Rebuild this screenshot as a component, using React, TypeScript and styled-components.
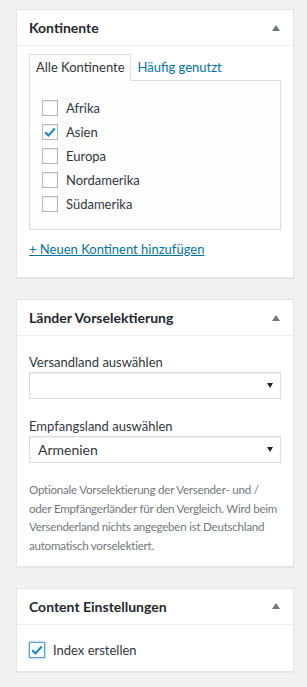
import React, { useState } from "react";
import styled, { createGlobalStyle } from "styled-components";

const GlobalStyle = createGlobalStyle`
  html, body {
    margin: 0;
    padding: 0;
    background: #f1f1f1;
  }
  body {
    font-family: Lato, "Open Sans", sans-serif;
    font-size: 13px;
    color: #444;
  }
`;

const Sidebar = styled.div`
  padding: 9px 13px 16px 16px;
  display: flex;
  flex-direction: column;
  gap: 21px;
`;

const Postbox = styled.section`
  background: #fff;
  border: 1px solid #e5e5e5;
  box-shadow: 0 1px 1px rgba(0, 0, 0, 0.04);
`;

const PostboxHeader = styled.div`
  display: flex;
  align-items: center;
  justify-content: space-between;
  padding: 8px 12px;
  border-bottom: 1px solid #eee;
`;

const PostboxTitle = styled.h2`
  margin: 0;
  font-size: 14px;
  line-height: 19px;
  font-weight: 700;
  color: #23282d;
`;

const ToggleArrow = styled.span`
  width: 0;
  height: 0;
  margin-right: 1px;
  border-left: 4px solid transparent;
  border-right: 4px solid transparent;
  border-bottom: 6px solid #72777c;
`;

const Inside = styled.div<{ top: number; bottom: number }>`
  padding: ${(p) => p.top}px 12px ${(p) => p.bottom}px;
`;

const Tabs = styled.ul`
  display: flex;
  margin: 0;
  padding: 0;
  list-style: none;
`;

const Tab = styled.li<{ active?: boolean }>`
  padding: 3px 5px 4px 6px;
  line-height: 19px;
  border: 1px solid ${(p) => (p.active ? "#ddd" : "transparent")};
  border-bottom: none;
  background: ${(p) => (p.active ? "#fdfdfd" : "transparent")};
  color: ${(p) => (p.active ? "#32373c" : "#0073aa")};
  margin-bottom: -1px;
  position: relative;
  cursor: pointer;
`;

const TabsPanel = styled.ul`
  margin: 0;
  padding: 15px 12px 13px;
  list-style: none;
  border: 1px solid #ddd;
  background: #fdfdfd;
`;

const CheckRow = styled.label`
  display: flex;
  align-items: center;
  gap: 8px;
  line-height: 24px;
  color: #32373c;
  cursor: pointer;
`;

const Box = styled.span<{ focused?: boolean }>`
  box-sizing: border-box;
  width: 16px;
  height: 16px;
  flex: none;
  display: flex;
  align-items: center;
  justify-content: center;
  background: #fff;
  border: 1px solid ${(p) => (p.focused ? "#5b9dd9" : "#b4b9be")};
  box-shadow: ${(p) =>
    p.focused
      ? "0 0 2px rgba(30, 140, 190, 0.8)"
      : "inset 0 1px 2px rgba(0, 0, 0, 0.1)"};
`;

const AddLink = styled.a`
  display: inline-block;
  margin-top: 10px;
  color: #0073aa;
  text-decoration: underline;
  font-size: 13px;
  line-height: 19px;
`;

const FieldLabel = styled.div`
  line-height: 19px;
  color: #32373c;
`;

const Select = styled.div`
  box-sizing: border-box;
  height: 27px;
  display: flex;
  align-items: center;
  justify-content: space-between;
  padding: 0 7px 0 8px;
  border: 1px solid #ddd;
  box-shadow: inset 0 1px 2px rgba(0, 0, 0, 0.07);
  font-size: 14px;
  color: #32373c;
  margin-bottom: 18px;
`;

const SelectArrow = styled.span`
  width: 0;
  height: 0;
  border-left: 3px solid transparent;
  border-right: 3px solid transparent;
  border-top: 5px solid #222;
`;

const Description = styled.p`
  margin: 0;
  font-size: 11.6px;
  line-height: 18.7px;
  letter-spacing: -0.25px;
  color: #72777c;
`;

const Check = () => (
  <svg width="14" height="14" viewBox="0 0 14 14">
    <path
      d="M2.2 7.2 L5.4 10.4 L11.8 3.4"
      fill="none"
      stroke="#1e8cbe"
      strokeWidth="2.2"
    />
  </svg>
);

const continents = ["Afrika", "Asien", "Europa", "Nordamerika", "Südamerika"];

export default function App() {
  const [checked, setChecked] = useState<string[]>(["Asien"]);
  const [index, setIndex] = useState(true);

  const toggle = (name: string) =>
    setChecked((c) => (c.includes(name) ? c.filter((x) => x !== name) : [...c, name]));

  return (
    <>
      <GlobalStyle />
      <Sidebar>
        <Postbox>
          <PostboxHeader>
            <PostboxTitle>Kontinente</PostboxTitle>
            <ToggleArrow />
          </PostboxHeader>
          <Inside top={8} bottom={18}>
            <Tabs>
              <Tab active>Alle Kontinente</Tab>
              <Tab>Häufig genutzt</Tab>
            </Tabs>
            <TabsPanel>
              {continents.map((c) => (
                <li key={c}>
                  <CheckRow onClick={() => toggle(c)}>
                    <Box>{checked.includes(c) && <Check />}</Box>
                    {c}
                  </CheckRow>
                </li>
              ))}
            </TabsPanel>
            <AddLink href="#">+ Neuen Kontinent hinzufügen</AddLink>
          </Inside>
        </Postbox>

        <Postbox>
          <PostboxHeader>
            <PostboxTitle>Länder Vorselektierung</PostboxTitle>
            <ToggleArrow />
          </PostboxHeader>
          <Inside top={17} bottom={10}>
            <FieldLabel>Versandland auswählen</FieldLabel>
            <Select>
              <span />
              <SelectArrow />
            </Select>
            <FieldLabel>Empfangsland auswählen</FieldLabel>
            <Select>
              <span>Armenien</span>
              <SelectArrow />
            </Select>
            <Description>
              Optionale Vorselektierung der Versender- und / oder Empfängerländer für den
              Vergleich. Wird beim Versenderland nichts angegeben ist Deutschland
              automatisch vorselektiert.
            </Description>
          </Inside>
        </Postbox>

        <Postbox>
          <PostboxHeader>
            <PostboxTitle>Content Einstellungen</PostboxTitle>
            <ToggleArrow />
          </PostboxHeader>
          <Inside top={13} bottom={9}>
            <CheckRow onClick={() => setIndex(!index)}>
              <Box focused>{index && <Check />}</Box>
              Index erstellen
            </CheckRow>
          </Inside>
        </Postbox>
      </Sidebar>
    </>
  );
}
